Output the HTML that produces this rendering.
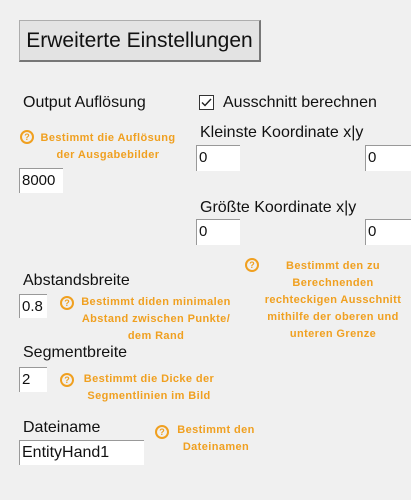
<!DOCTYPE html>
<html><head><meta charset="utf-8"><style>
*{margin:0;padding:0;box-sizing:border-box}
body{width:411px;height:500px;background:#f0f0f0;position:relative;overflow:hidden;font-family:"Liberation Sans",sans-serif;color:#111}
.a{position:absolute;white-space:nowrap}
.btn{position:absolute;left:19px;top:20px;width:242px;height:42px;background:#e3e3e3;border:1px solid #adadad;border-right:2px solid #777;border-bottom:2px solid #777;font-size:21px;line-height:40px;text-align:center;color:#111}
.lbl{font-size:16px;line-height:18px}
.in{position:absolute;background:#fff;border-top:1px solid #999;border-left:1px solid #999;font-size:15px;line-height:24px;padding-left:2px;color:#111}
.h{position:absolute;color:#f0a020;font-weight:bold;font-size:11px;letter-spacing:0.4px;line-height:17px;text-align:center;white-space:nowrap}
.q{position:absolute;width:14px;height:14px;border:2px solid #f0a020;border-radius:50%;color:#f0a020;font-size:9px;font-weight:bold;line-height:10px;text-align:center}
</style></head><body>
<div class="btn">Erweiterte Einstellungen</div>

<div class="a lbl" style="left:23px;top:94px">Output Auflösung</div>
<div class="q" style="left:20px;top:130px">?</div>
<div class="h" style="left:38px;top:130px;width:140px">Bestimmt die Auflösung<br>der Ausgabebilder</div>
<div class="in" style="left:19px;top:168px;width:44px;height:25px">8000</div>

<div class="a" style="left:199px;top:95px;width:15px;height:15px;border:1px solid #333;background:#fff"></div>
<svg class="a" style="left:200px;top:96px" width="13" height="13"><path d="M2 6.5 L5 9.5 L11 3" stroke="#222" stroke-width="1.4" fill="none"/></svg>
<div class="a lbl" style="left:223px;top:94px">Ausschnitt berechnen</div>
<div class="a lbl" style="left:200px;top:124px">Kleinste Koordinate x|y</div>
<div class="in" style="left:196px;top:145px;width:44px;height:26px">0</div>
<div class="in" style="left:365px;top:145px;width:46px;height:26px">0</div>
<div class="a lbl" style="left:200px;top:199px">Größte Koordinate x|y</div>
<div class="in" style="left:196px;top:219px;width:44px;height:26px">0</div>
<div class="in" style="left:365px;top:219px;width:46px;height:26px">0</div>

<div class="q" style="left:245px;top:258px">?</div>
<div class="h" style="left:258px;top:258px;width:150px">Bestimmt den zu<br>Berechnenden<br>rechteckigen Ausschnitt<br>mithilfe der oberen und<br>unteren Grenze</div>

<div class="a lbl" style="left:23px;top:272px">Abstandsbreite</div>
<div class="in" style="left:19px;top:294px;width:28px;height:24px">0.8</div>
<div class="q" style="left:60px;top:296px">?</div>
<div class="h" style="left:76px;top:294px;width:160px">Bestimmt diden minimalen<br>Abstand zwischen Punkte/<br>dem Rand</div>
<div class="a lbl" style="left:23px;top:344px">Segmentbreite</div>
<div class="in" style="left:19px;top:367px;width:28px;height:25px">2</div>
<div class="q" style="left:60px;top:373px">?</div>
<div class="h" style="left:80px;top:371px;width:138px">Bestimmt die Dicke der<br>Segmentlinien im Bild</div>
<div class="a lbl" style="left:23px;top:419px">Dateiname</div>
<div class="in" style="left:19px;top:440px;width:125px;height:25px;font-size:16px">EntityHand1</div>
<div class="q" style="left:155px;top:425px">?</div>
<div class="h" style="left:173px;top:422px;width:86px">Bestimmt den<br>Dateinamen</div>
</body></html>
